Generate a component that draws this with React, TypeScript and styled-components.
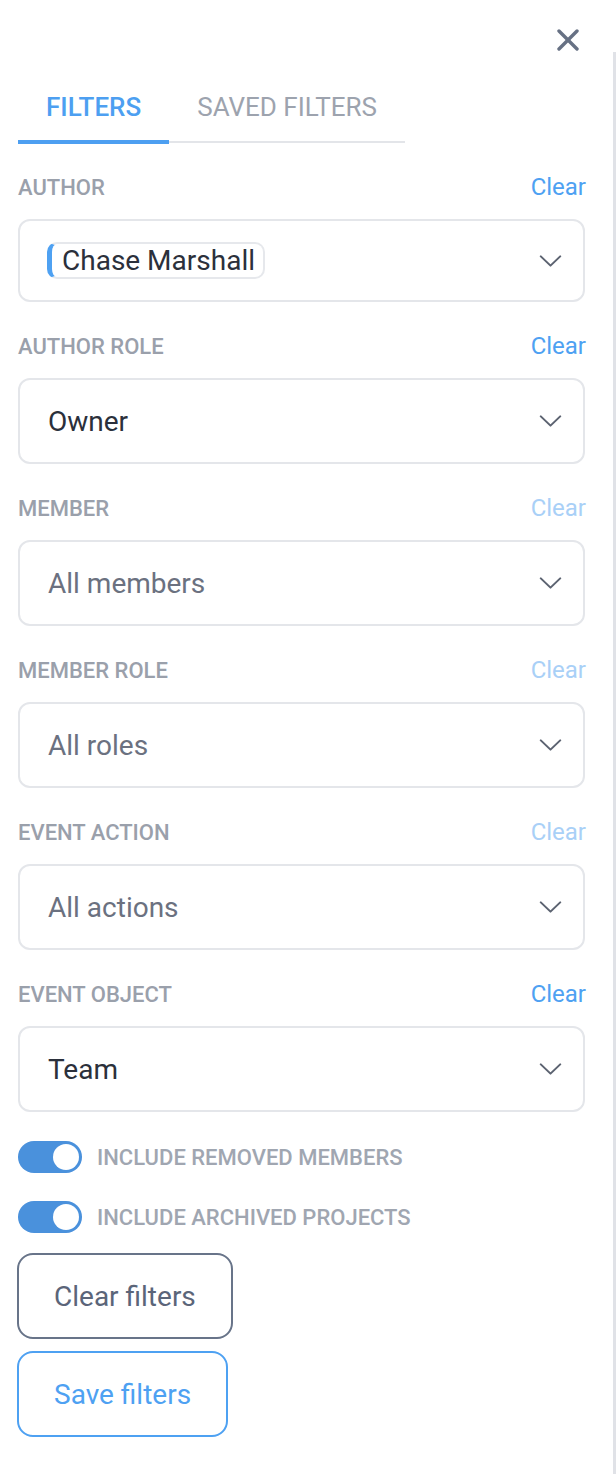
import { createGlobalStyle } from 'styled-components';
import styled from 'styled-components';

const GlobalStyle = createGlobalStyle`
  html, body {
    margin: 0;
    padding: 0;
    background: #ffffff;
  }
  body {
    font-family: Roboto, "Liberation Sans", Arial, sans-serif;
    -webkit-font-smoothing: antialiased;
  }
  * {
    box-sizing: border-box;
  }
`;

const Page = styled.div`
  display: flex;
  min-height: 1474px;
`;

const Panel = styled.div`
  flex: 1;
  padding: 0 28px 0 18px;
`;

const ScrollTrack = styled.div`
  width: 3px;
  margin-top: 52px;
  background: #e0e2e7;
`;

const TopBar = styled.div`
  height: 80px;
  display: flex;
  justify-content: flex-end;
  align-items: center;
  padding-right: 6px;
`;

const CloseButton = styled.button`
  border: 0;
  background: none;
  padding: 0;
  width: 22px;
  height: 22px;
  color: #677184;
  cursor: pointer;
  display: flex;
`;

const TabList = styled.div`
  display: flex;
  align-items: flex-start;
  margin-bottom: 31px;
`;

const Tab = styled.div<{ $active?: boolean }>`
  font-size: 26px;
  line-height: 30px;
  font-weight: ${p => (p.$active ? 500 : 400)};
  color: ${p => (p.$active ? '#4d9ff1' : '#9da3ae')};
  text-transform: uppercase;
  padding: 12px 28px ${p => (p.$active ? '18px' : '19px')};
  border-bottom: ${p => (p.$active ? '4px solid #4d9ff1' : '2px solid #e3e5e9')};
  margin-bottom: ${p => (p.$active ? '0' : '1px')};
`;

const Section = styled.div`
  margin-bottom: 32px;
`;

const SectionHeader = styled.div`
  height: 24px;
  display: flex;
  justify-content: space-between;
  align-items: center;
  margin-bottom: 20px;
`;

const Label = styled.span`
  font-size: 22px;
  font-weight: 500;
  color: #9aa0ab;
  text-transform: uppercase;
`;

const ClearLink = styled.a<{ $faded?: boolean }>`
  font-size: 24px;
  color: ${p => (p.$faded ? '#a9d0f7' : '#4ea1f2')};
  cursor: pointer;
  margin-right: -1px;
`;

const SelectBox = styled.div<{ $height: number }>`
  height: ${p => p.$height}px;
  border: 2px solid #e4e6ea;
  border-radius: 12px;
  display: flex;
  align-items: center;
  justify-content: space-between;
  padding: 0 21px 0 28px;
`;

const SelectValue = styled.span<{ $placeholder?: boolean }>`
  font-size: 28px;
  color: ${p => (p.$placeholder ? '#6b7180' : '#2b303b')};
`;

const Chip = styled.span`
  display: inline-flex;
  align-items: center;
  height: 37px;
  margin-left: -1px;
  padding: 0 8px 0 10px;
  border: 2px solid #e6e8ec;
  border-left: 5px solid #4ea1f2;
  border-radius: 10px;
  font-size: 28px;
  color: #2b303b;
`;

const Chevron = styled.svg`
  width: 23px;
  height: 12px;
  color: #5c6371;
  flex-shrink: 0;
`;

const Toggles = styled.div`
  display: flex;
  flex-direction: column;
  gap: 28px;
  margin-top: -3px;
  margin-bottom: 20px;
`;

const ToggleRow = styled.label`
  display: flex;
  align-items: center;
  gap: 15px;
  height: 32px;
`;

const ToggleTrack = styled.span<{ $on: boolean }>`
  position: relative;
  width: 64px;
  height: 32px;
  border-radius: 16px;
  background: ${p => (p.$on ? '#4a91dc' : '#d4d8de')};
  flex-shrink: 0;
`;

const ToggleKnob = styled.span<{ $on: boolean }>`
  position: absolute;
  top: 3px;
  ${p => (p.$on ? 'right: 3px;' : 'left: 3px;')}
  width: 26px;
  height: 26px;
  border-radius: 50%;
  background: #ffffff;
`;

const ToggleLabel = styled.span`
  font-size: 22px;
  font-weight: 500;
  color: #a0a6b1;
  text-transform: uppercase;
`;

const Actions = styled.div`
  display: flex;
  flex-direction: column;
  align-items: flex-start;
  gap: 12px;
`;

const Button = styled.button<{ $primary?: boolean }>`
  height: 86px;
  padding: 0 35px;
  margin-left: -1px;
  border-radius: 16px;
  background: #ffffff;
  border: 2px solid ${p => (p.$primary ? '#4ea1f2' : '#687489')};
  color: ${p => (p.$primary ? '#4ea1f2' : '#5b6579')};
  font-family: Roboto, "Liberation Sans", Arial, sans-serif;
  font-size: 28px;
  cursor: pointer;
`;

const ChevronDown = () => (
  <Chevron viewBox="0 0 24 13" fill="none" stroke="currentColor" strokeWidth="2.2" strokeLinecap="round" strokeLinejoin="round">
    <polyline points="1.5,1.5 12,11.5 22.5,1.5" />
  </Chevron>
);

type Filter = {
  label: string;
  value: string;
  placeholder?: boolean;
  faded?: boolean;
};

const filters: Filter[] = [
  { label: 'Author role', value: 'Owner' },
  { label: 'Member', value: 'All members', placeholder: true, faded: true },
  { label: 'Member role', value: 'All roles', placeholder: true, faded: true },
  { label: 'Event action', value: 'All actions', placeholder: true, faded: true },
  { label: 'Event object', value: 'Team' },
];

const Toggle = ({ on, label }: { on: boolean; label: string }) => (
  <ToggleRow>
    <ToggleTrack $on={on}>
      <ToggleKnob $on={on} />
    </ToggleTrack>
    <ToggleLabel>{label}</ToggleLabel>
  </ToggleRow>
);

export default function App() {
  return (
    <Page>
      <GlobalStyle />
      <Panel>
        <TopBar>
          <CloseButton aria-label="Close">
            <svg viewBox="0 0 22 22" width="22" height="22" fill="none" stroke="currentColor" strokeWidth="3.4" strokeLinecap="round">
              <line x1="2" y1="2" x2="20" y2="20" />
              <line x1="20" y1="2" x2="2" y2="20" />
            </svg>
          </CloseButton>
        </TopBar>

        <TabList>
          <Tab $active>Filters</Tab>
          <Tab>Saved filters</Tab>
        </TabList>

        <Section>
          <SectionHeader>
            <Label>Author</Label>
            <ClearLink>Clear</ClearLink>
          </SectionHeader>
          <SelectBox $height={83}>
            <Chip>Chase Marshall</Chip>
            <ChevronDown />
          </SelectBox>
        </Section>

        {filters.map(f => (
          <Section key={f.label}>
            <SectionHeader>
              <Label>{f.label}</Label>
              <ClearLink $faded={f.faded}>Clear</ClearLink>
            </SectionHeader>
            <SelectBox $height={86}>
              <SelectValue $placeholder={f.placeholder}>{f.value}</SelectValue>
              <ChevronDown />
            </SelectBox>
          </Section>
        ))}

        <Toggles>
          <Toggle on label="Include removed members" />
          <Toggle on label="Include archived projects" />
        </Toggles>

        <Actions>
          <Button>Clear filters</Button>
          <Button $primary>Save filters</Button>
        </Actions>
      </Panel>
      <ScrollTrack />
    </Page>
  );
}
